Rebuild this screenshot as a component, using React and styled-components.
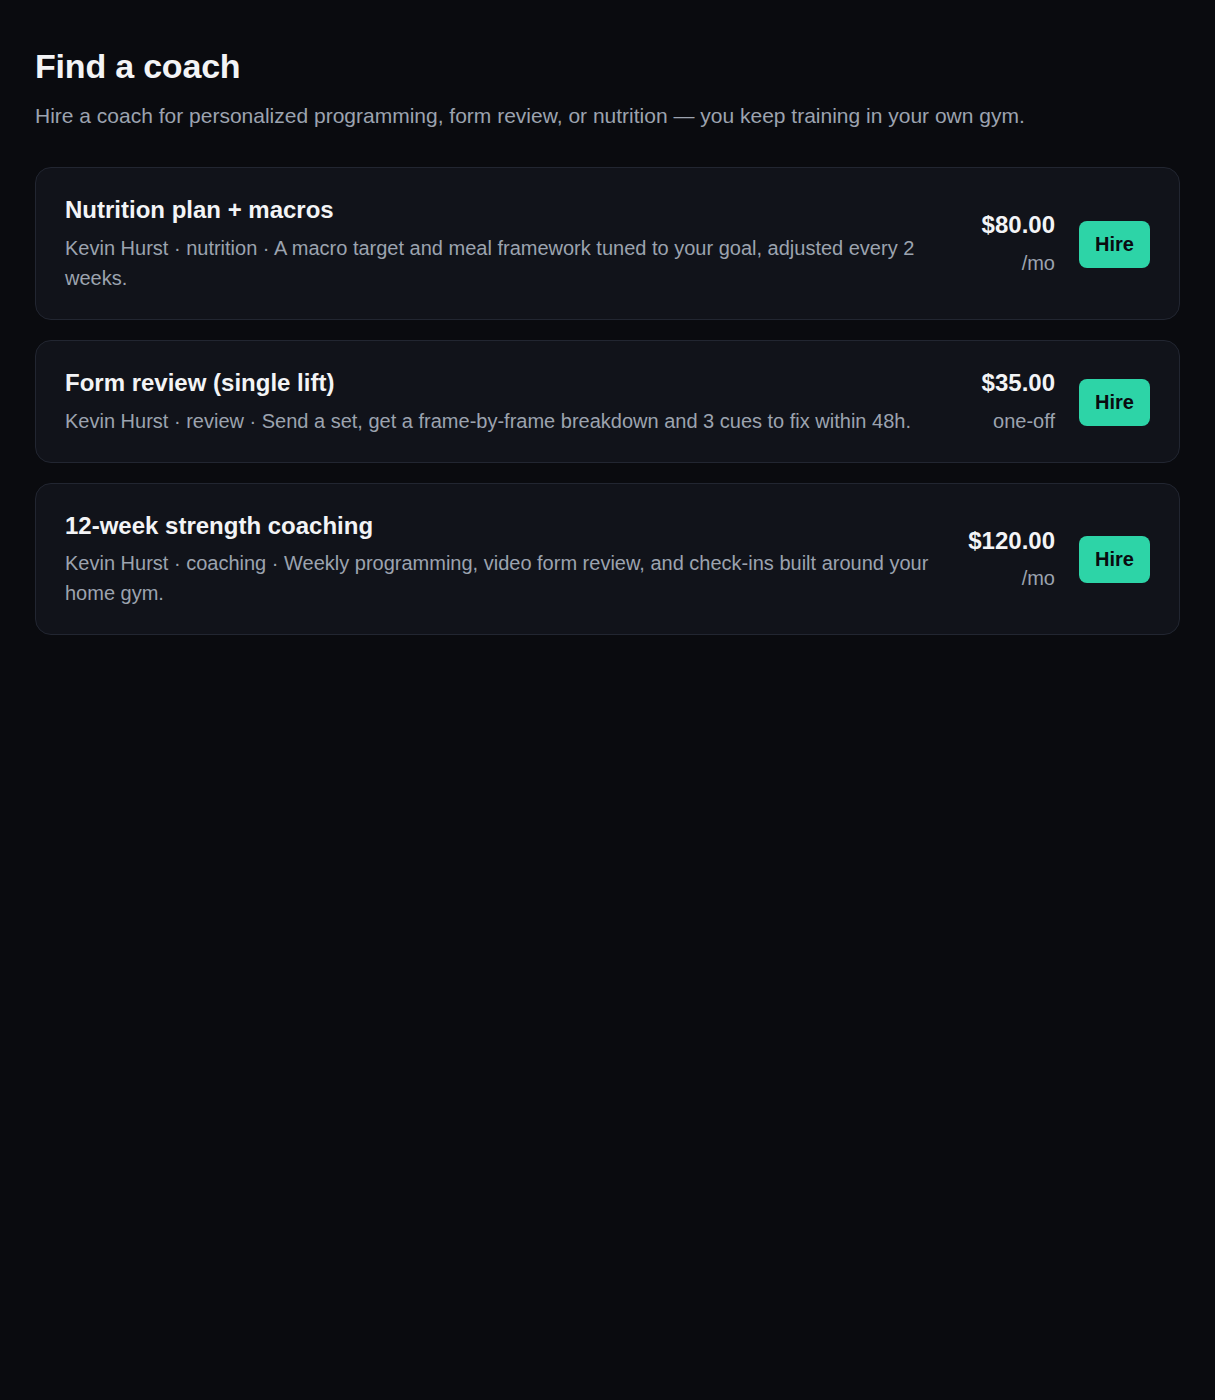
import styled, { createGlobalStyle } from "styled-components";

const GlobalStyle = createGlobalStyle`
  html, body {
    margin: 0;
    padding: 0;
    background: #0a0b0f;
  }
  body {
    font-family: "Liberation Sans", Arial, sans-serif;
    min-height: 1400px;
  }
  * { box-sizing: border-box; }
`;

const Page = styled.div`
  padding: 46px 35px 60px;
  color: #f3f4f6;
`;

const Heading = styled.h1`
  margin: 0;
  font-size: 34px;
  line-height: 40px;
  font-weight: 700;
  color: #f3f4f6;
  letter-spacing: -0.2px;
`;

const Subtitle = styled.p`
  margin: 15px 0 36px;
  font-size: 21px;
  line-height: 30px;
  color: #9ca3af;
`;

const List = styled.div`
  display: flex;
  flex-direction: column;
  gap: 20px;
`;

const Card = styled.div`
  display: flex;
  align-items: center;
  gap: 24px;
  padding: 28px 29px 26px;
  background: #11131a;
  border: 1px solid #222631;
  border-radius: 16px;
`;

const Info = styled.div`
  flex: 1;
  min-width: 0;
`;

const Title = styled.div`
  font-size: 24px;
  line-height: 1.2;
  font-weight: 700;
  color: #f3f4f6;
  margin-bottom: 8px;
`;

const Desc = styled.div`
  font-size: 20px;
  line-height: 30px;
  color: #9ca3af;
`;

const PriceCol = styled.div`
  display: flex;
  flex-direction: column;
  align-items: flex-end;
  flex-shrink: 0;
`;

const Price = styled.div`
  font-size: 24px;
  line-height: 1.2;
  font-weight: 700;
  color: #f3f4f6;
`;

const Period = styled.div`
  margin-top: 8px;
  font-size: 20px;
  line-height: 30px;
  color: #9ca3af;
`;

const HireButton = styled.button`
  flex-shrink: 0;
  border: none;
  border-radius: 8px;
  background: #2dd4a7;
  color: #0a0b0f;
  font-family: inherit;
  font-size: 20px;
  font-weight: 700;
  width: 71px;
  height: 47px;
  cursor: pointer;
`;

const offers = [
  {
    title: "Nutrition plan + macros",
    kind: "nutrition",
    desc: "A macro target and meal framework tuned to your goal, adjusted every 2 weeks.",
    price: "$80.00",
    period: "/mo",
  },
  {
    title: "Form review (single lift)",
    kind: "review",
    desc: "Send a set, get a frame-by-frame breakdown and 3 cues to fix within 48h.",
    price: "$35.00",
    period: "one-off",
  },
  {
    title: "12-week strength coaching",
    kind: "coaching",
    desc: "Weekly programming, video form review, and check-ins built around your home gym.",
    price: "$120.00",
    period: "/mo",
  },
];

export default function App() {
  return (
    <>
      <GlobalStyle />
      <Page>
        <Heading>Find a coach</Heading>
        <Subtitle>
          Hire a coach for personalized programming, form review, or nutrition — you keep training in your own gym.
        </Subtitle>
        <List>
          {offers.map((o) => (
            <Card key={o.title}>
              <Info>
                <Title>{o.title}</Title>
                <Desc>
                  Kevin Hurst · {o.kind} · {o.desc}
                </Desc>
              </Info>
              <PriceCol>
                <Price>{o.price}</Price>
                <Period>{o.period}</Period>
              </PriceCol>
              <HireButton>Hire</HireButton>
            </Card>
          ))}
        </List>
      </Page>
    </>
  );
}
